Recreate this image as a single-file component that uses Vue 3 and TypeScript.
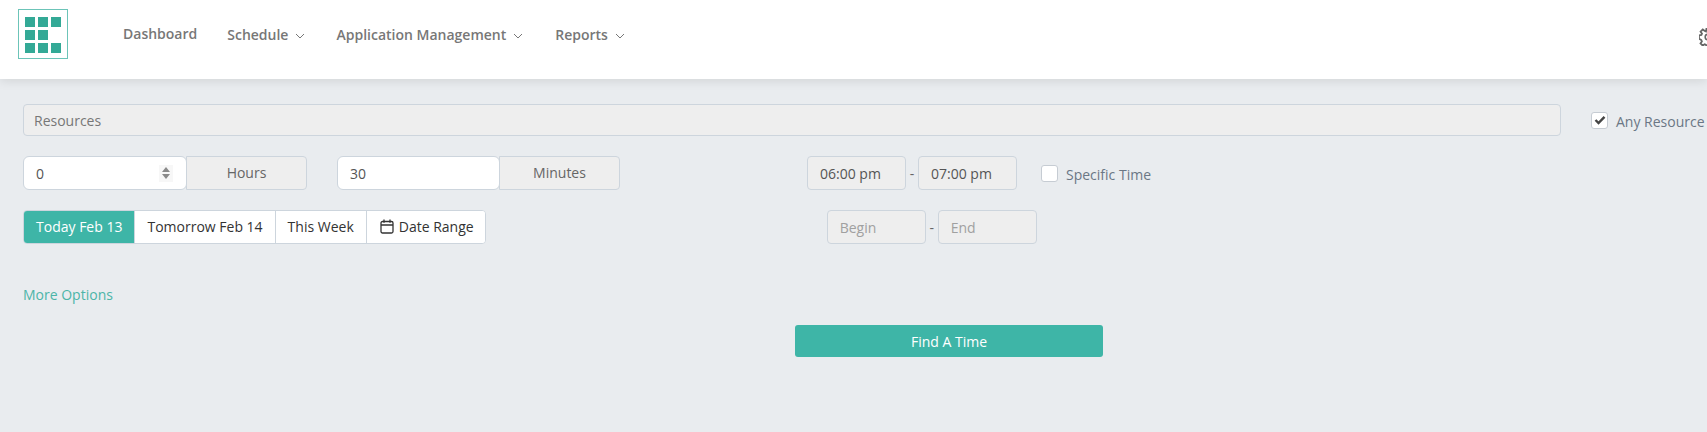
<script setup lang="ts">
const navItems = [
  { label: 'Dashboard', caret: false },
  { label: 'Schedule', caret: true },
  { label: 'Application Management', caret: true },
  { label: 'Reports', caret: true },
]

const logoCells = [1, 1, 1, 1, 1, 0, 1, 1, 1]

const dateTabs = ['Today Feb 13', 'Tomorrow Feb 14', 'This Week']
</script>

<template>
  <div class="page">
    <header class="topbar">
      <div class="logo">
        <span v-for="(on, i) in logoCells" :key="i" :class="['cell', { off: !on }]"></span>
      </div>
      <nav class="nav">
        <a v-for="item in navItems" :key="item.label" :class="['nav-item', { plain: !item.caret }]">
          {{ item.label }}
          <svg v-if="item.caret" class="caret" width="10" height="6" viewBox="0 0 10 6">
            <path d="M1 1l4 4 4-4" fill="none" stroke="#777" stroke-width="1" />
          </svg>
        </a>
      </nav>
      <svg class="gear" width="18" height="18" viewBox="0 0 18 18">
        <path
          d="M7.4 1h3.2l.4 2.4 1.3.6 2-1.4 2.2 2.2-1.4 2 .6 1.3 2.4.4v3.2l-2.4.4-.6 1.3 1.4 2-2.2 2.2-2-1.4-1.3.6-.4 2.4H7.4l-.4-2.4-1.3-.6-2 1.4-2.2-2.2 1.4-2-.6-1.3L0 10.6V7.4l2.4-.4.6-1.3-1.4-2 2.2-2.2 2 1.4L7 3.4z"
          fill="none"
          stroke="#666"
          stroke-width="1.8"
        />
        <circle cx="9" cy="9" r="2.8" fill="none" stroke="#666" stroke-width="1.6" />
      </svg>
    </header>

    <main class="content">
      <div class="row row-resources">
        <div class="field resources">Resources</div>
        <label class="check any">
          <span class="box">
            <svg width="12" height="10" viewBox="0 0 12 10">
              <path d="M1.5 5l3 3 6-6.2" fill="none" stroke="#444" stroke-width="2.4" />
            </svg>
          </span>
          <span class="check-text">Any Resource</span>
        </label>
      </div>

      <div class="row row-duration">
        <div class="group">
          <div class="field white num">
            0
            <span class="spin">
              <svg width="8" height="12" viewBox="0 0 8 12">
                <path d="M4 0l4 5H0zM4 12L0 7h8z" fill="#8a8a8a" />
              </svg>
            </span>
          </div>
          <div class="field addon"><span>Hours</span></div>
        </div>
        <div class="group second">
          <div class="field white num">30</div>
          <div class="field addon"><span>Minutes</span></div>
        </div>
        <div class="range time">
          <div class="field slot">06:00 pm</div>
          <span class="dash">-</span>
          <div class="field slot">07:00 pm</div>
        </div>
        <label class="check specific">
          <span class="box"></span>
          <span class="check-text">Specific Time</span>
        </label>
      </div>

      <div class="row row-dates">
        <div class="tabs">
          <button v-for="(tab, i) in dateTabs" :key="tab" :class="['tab', { active: i === 0 }]">{{ tab }}</button>
          <button class="tab range-tab">
            <svg class="cal" width="14" height="15" viewBox="0 0 14 15">
              <rect x="1" y="2.5" width="12" height="11.5" rx="1.5" fill="none" stroke="#333" stroke-width="1.3" />
              <path d="M1 6h12M4 .6v3.2M10 .6v3.2" fill="none" stroke="#333" stroke-width="1.3" />
            </svg>
            Date Range
          </button>
        </div>
        <div class="range dates">
          <div class="field slot hint">Begin</div>
          <span class="dash">-</span>
          <div class="field slot hint">End</div>
        </div>
      </div>

      <a class="more">More Options</a>

      <div class="actions">
        <button class="find">Find A Time</button>
      </div>
    </main>
  </div>
</template>

<style>
html,
body {
  margin: 0;
  overflow: hidden;
}
</style>

<style scoped>
.page {
  width: 1707px;
  height: 432px;
  overflow: hidden;
  background: #e9ecef;
  font-family: 'Open Sans', 'Noto Sans', sans-serif;
  font-size: 14px;
  color: #555;
}
.topbar {
  display: flex;
  align-items: flex-start;
  height: 79px;
  padding: 9px 0 0 18px;
  box-sizing: border-box;
  background: #fff;
  box-shadow: 0 2px 10px rgba(0, 0, 0, 0.1);
  position: relative;
}
.logo {
  display: grid;
  grid-template-columns: repeat(3, 10px);
  grid-auto-rows: 10px;
  gap: 3px 3px;
  width: 50px;
  height: 50px;
  padding: 7px 6px;
  box-sizing: border-box;
  border: 1px solid #6cc4b8;
}
.cell {
  background: #33a996;
}
.cell.off {
  background: transparent;
}
.nav {
  display: flex;
  align-items: center;
  margin: 16px 0 0 55px;
  gap: 30px;
}
.nav-item {
  display: flex;
  align-items: center;
  gap: 7px;
  font-weight: 600;
  color: #777;
}
.nav-item.plain {
  margin-top: -2px;
}
.nav-item:last-child {
  margin-left: 1px;
}
.caret {
  margin: 2px 1px 0 0;
}
.gear {
  position: absolute;
  left: 1699px;
  top: 28px;
}
.content {
  padding: 25px 0 0 23px;
}
.row {
  display: flex;
}
.field {
  box-sizing: border-box;
  height: 34px;
  display: flex;
  align-items: center;
  background: #eee;
  border: 1px solid #cdd5dd;
  border-radius: 4px;
  padding: 0 12px;
  white-space: nowrap;
}
.resources {
  width: 1538px;
  height: 32px;
  padding-left: 10px;
  color: #777;
}
.row-resources {
  align-items: center;
}
.check {
  display: flex;
  align-items: center;
  gap: 8px;
  color: #6b7785;
  white-space: nowrap;
}
.check-text {
  position: relative;
  top: 1px;
}
.box {
  box-sizing: border-box;
  width: 17px;
  height: 17px;
  display: flex;
  align-items: center;
  justify-content: center;
  background: #fff;
  border: 1px solid #c6ccd3;
  border-radius: 3px;
}
.any {
  margin-left: 30px;
}
.row-duration {
  margin-top: 20px;
  align-items: center;
}
.group {
  display: flex;
  width: 284px;
}
.group.second {
  width: 283px;
  margin-left: 30px;
}
.white {
  background: #fff;
  position: relative;
}
.num {
  width: 164px;
  border-radius: 6px;
  z-index: 1;
}
.second .num {
  width: 163px;
}
.spin {
  position: absolute;
  right: 13px;
  top: 8px;
  width: 14px;
  height: 17px;
  display: flex;
  justify-content: center;
  padding-top: 2px;
  box-sizing: border-box;
  background: #f7f7f7;
}
.addon {
  flex: 1;
  justify-content: center;
  margin-left: -1px;
  border-radius: 0 4px 4px 0;
  color: #666;
}
.addon span {
  position: relative;
  top: -1px;
}
.range {
  display: flex;
  align-items: center;
}
.time {
  margin-left: 187px;
}
.dash {
  width: 12px;
  text-align: center;
  color: #666;
}
.slot {
  width: 99px;
}
.hint {
  color: #a0a0a0;
}
.specific {
  margin-left: 24px;
}
.row-dates {
  margin-top: 20px;
}
.tabs {
  display: flex;
  height: 34px;
  box-sizing: border-box;
  background: #fff;
  border: 1px solid #cdd5dd;
  border-radius: 4px;
  overflow: hidden;
}
.tab {
  display: flex;
  align-items: center;
  gap: 5px;
  padding: 0 12px 2px;
  border: 0;
  border-left: 1px solid #cdd5dd;
  background: #fff;
  font: inherit;
  color: #333;
  white-space: nowrap;
}
.tab:first-child {
  border-left: 0;
}
.tab.active {
  background: #3eb5a7;
  color: #fff;
}
.range-tab {
  padding-left: 13px;
  padding-right: 11px;
}
.dates {
  margin-left: 341px;
}
.more {
  display: block;
  margin-top: 41px;
  color: #4cb5a8;
  line-height: 20px;
}
.actions {
  margin: 20px 0 0 772px;
}
.find {
  display: block;
  width: 308px;
  height: 32px;
  border: 0;
  border-radius: 3px;
  background: #3eb5a7;
  color: #fff;
  font: inherit;
  font-weight: 500;
}
</style>
